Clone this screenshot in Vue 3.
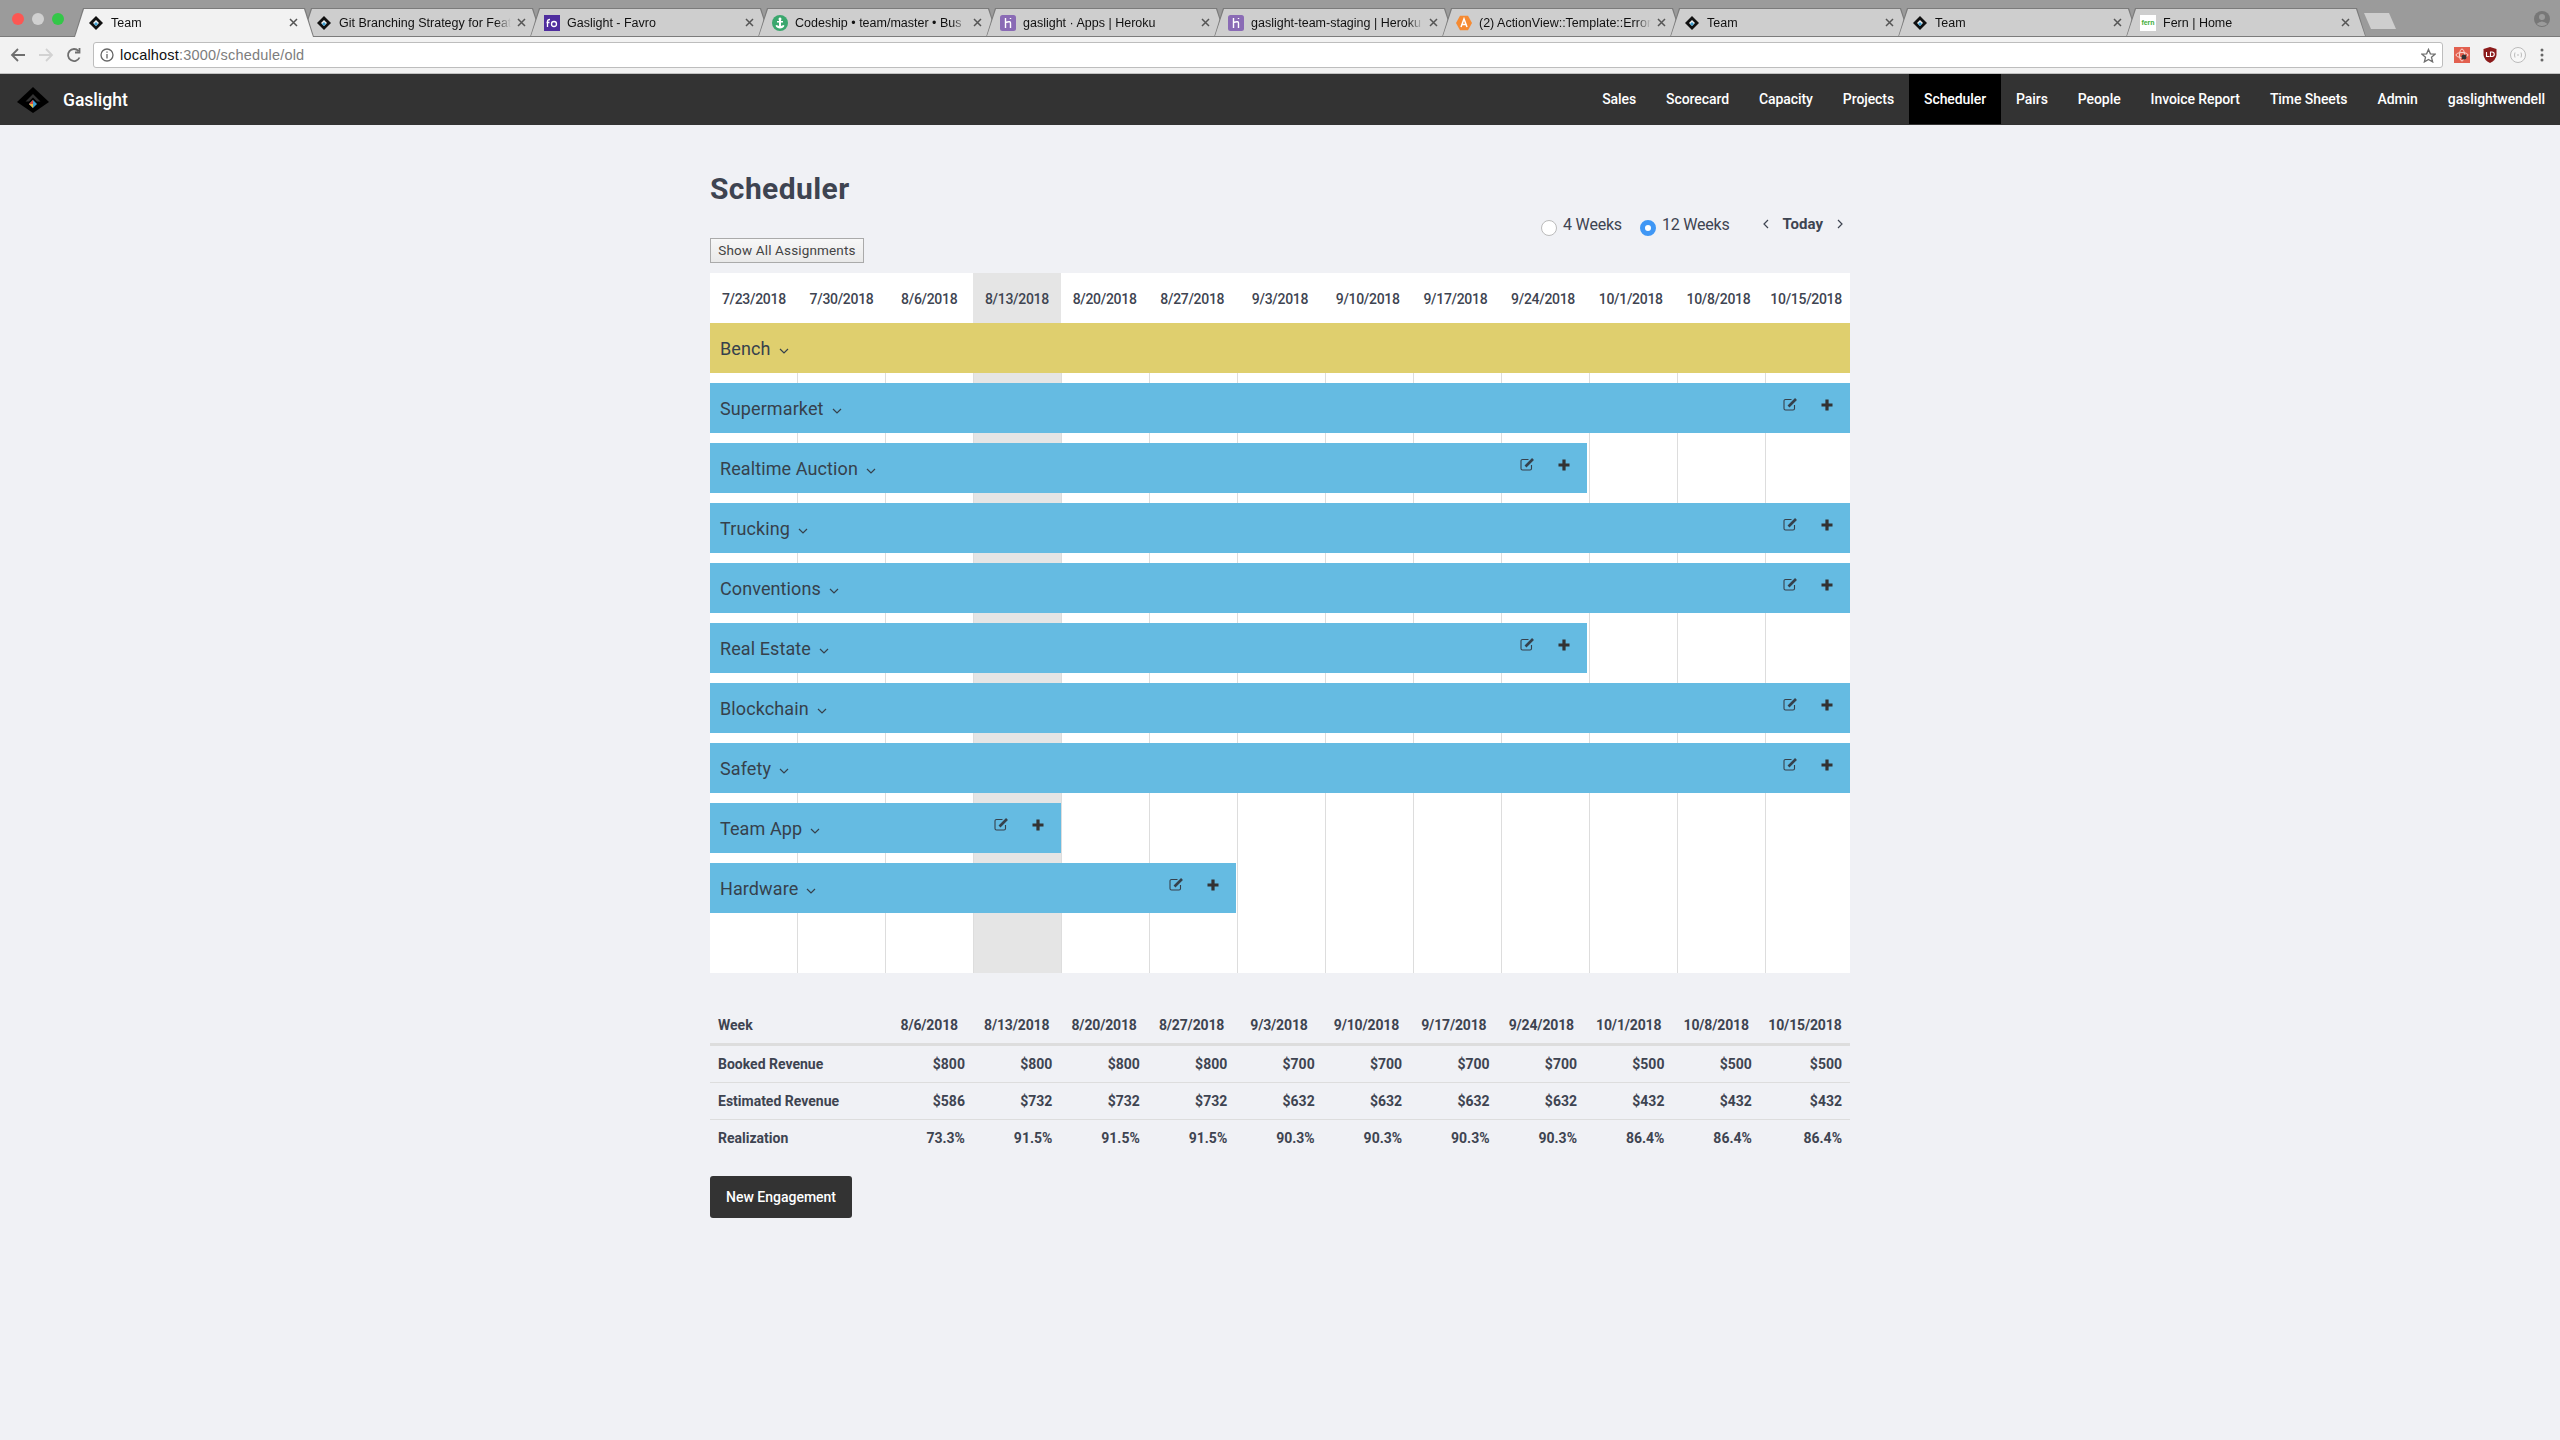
<script setup>
const tabs = [
  { title: 'Team', icon: 'logo', active: true },
  { title: 'Git Branching Strategy for Feat', icon: 'logo' },
  { title: 'Gaslight - Favro', icon: 'favro' },
  { title: 'Codeship • team/master • Bus', icon: 'codeship' },
  { title: 'gaslight · Apps | Heroku', icon: 'heroku' },
  { title: 'gaslight-team-staging | Heroku', icon: 'heroku' },
  { title: '(2) ActionView::Template::Error', icon: 'airbrake' },
  { title: 'Team', icon: 'logo' },
  { title: 'Team', icon: 'logo' },
  { title: 'Fern | Home', icon: 'fern' },
]

const navItems = ['Sales', 'Scorecard', 'Capacity', 'Projects', 'Scheduler', 'Pairs', 'People', 'Invoice Report', 'Time Sheets', 'Admin', 'gaslightwendell']

const dates = ['7/23/2018', '7/30/2018', '8/6/2018', '8/13/2018', '8/20/2018', '8/27/2018', '9/3/2018', '9/10/2018', '9/17/2018', '9/24/2018', '10/1/2018', '10/8/2018', '10/15/2018']

const projects = [
  { name: 'Bench', weeks: 13, bench: true },
  { name: 'Supermarket', weeks: 13 },
  { name: 'Realtime Auction', weeks: 10 },
  { name: 'Trucking', weeks: 13 },
  { name: 'Conventions', weeks: 13 },
  { name: 'Real Estate', weeks: 10 },
  { name: 'Blockchain', weeks: 13 },
  { name: 'Safety', weeks: 13 },
  { name: 'Team App', weeks: 4 },
  { name: 'Hardware', weeks: 6 },
]

const summary = [
  { label: 'Booked Revenue', values: ['$800', '$800', '$800', '$800', '$700', '$700', '$700', '$700', '$500', '$500', '$500'] },
  { label: 'Estimated Revenue', values: ['$586', '$732', '$732', '$732', '$632', '$632', '$632', '$632', '$432', '$432', '$432'] },
  { label: 'Realization', values: ['73.3%', '91.5%', '91.5%', '91.5%', '90.3%', '90.3%', '90.3%', '90.3%', '86.4%', '86.4%', '86.4%'] },
]
</script>

<template>
  <div class="page">
    <svg class="defs" aria-hidden="true">
      <symbol id="logo" viewBox="0 0 32 26">
        <path d="M16 0 32 15 16 26 0 15Z" fill="#000" />
        <path d="M16 7 23.500 14.500 20 14.500 16 10.500 12 14.500 8.500 14.500Z" fill="#333" />
        <path d="M16 13 20 17 16 21 12 17Z" fill="#3f9fd0" />
        <path d="M12 17 16 13 16 17Z" fill="#e0473c" />
        <path d="M12 17 16 21 16 17Z" fill="#e8b93c" />
      </symbol>
      <symbol id="tablogo" viewBox="0 0 16 16">
        <path d="M8 1 15 8 8 15 1 8Z" fill="#111" />
        <path d="M8 5 11 8 8 11 5 8Z" fill="#f2f2f2" />
        <path d="M8 7 10 9 8 11 6 9Z" fill="#3f9fd0" />
      </symbol>
      <symbol id="favro" viewBox="0 0 16 16">
        <rect width="16" height="16" fill="#4f2d9e" />
        <path d="M3.500 12V6.500Q3.500 4.500 6 4.500M2.500 7.500H5.500" fill="none" stroke="#fff" stroke-width="1.300" />
        <circle cx="10" cy="9" r="2.500" fill="none" stroke="#fff" stroke-width="1.300" />
      </symbol>
      <symbol id="codeship" viewBox="0 0 16 16">
        <circle cx="8" cy="8" r="8" fill="#3aa76d" />
        <path d="M8 2.500a1.500 1.500 0 0 1 1 2.600V6h2v1.500H9V11l2.500-1 1 .8C11.500 12.500 10 13.500 8 13.500S4.500 12.500 3.500 10.800l1-.8L7 11V7.500H5V6h2V5.100A1.500 1.500 0 0 1 8 2.500Z" fill="#fff" />
      </symbol>
      <symbol id="heroku" viewBox="0 0 16 16">
        <rect width="16" height="16" rx="2.500" fill="#8a6bb5" />
        <path d="M5.500 3v10M5.500 7.500Q11 5.500 10.500 8.500V13M10.500 3v1" fill="none" stroke="#fff" stroke-width="1.400" />
      </symbol>
      <symbol id="airbrake" viewBox="0 0 16 16">
        <path d="M4 .8H12L16 8 12 15.200H4L0 8Z" fill="#f58a32" />
        <path d="M5 12 8 4 11 12M6.200 9.500H9.800" fill="none" stroke="#fff" stroke-width="1.500" />
      </symbol>
    </svg>

    <div class="tabstrip">
      <div class="lights">
        <span class="light red"></span>
        <span class="light grey"></span>
        <span class="light green"></span>
      </div>
      <div
        v-for="(tab, i) in tabs"
        :key="i"
        class="tab"
        :class="{ active: tab.active }"
      >
        <span v-if="tab.icon === 'fern'" class="fern-icon">fern</span>
        <svg v-else class="favicon"><use :href="tab.icon === 'logo' ? '#tablogo' : '#' + tab.icon" /></svg>
        <span class="tab-title">{{ tab.title }}</span>
        <svg class="tab-close" viewBox="0 0 9 9"><path d="M1 1 8 8M8 1 1 8" stroke="#555" stroke-width="1.500" /></svg>
      </div>
      <div class="new-tab"></div>
      <svg class="profile" viewBox="0 0 16 16">
        <circle cx="8" cy="8" r="8" fill="#777" />
        <circle cx="8" cy="6" r="3" fill="#9b9b9b" />
        <path d="M2.500 13Q8 8 13.500 13Q8 17 2.500 13Z" fill="#9b9b9b" />
      </svg>
    </div>

    <div class="toolbar">
      <svg class="tool" viewBox="0 0 16 16"><path d="M15 8H2M8 2 2 8l6 6" fill="none" stroke="#6e6e6e" stroke-width="1.800" /></svg>
      <svg class="tool" viewBox="0 0 16 16"><path d="M1 8H14M8 2l6 6-6 6" fill="none" stroke="#d2d2d2" stroke-width="1.800" /></svg>
      <svg class="tool" viewBox="0 0 16 16"><path d="M13.500 10.500A6 6 0 1 1 12.500 4M13.500 1v4.500H9" fill="none" stroke="#6e6e6e" stroke-width="1.800" /></svg>
      <div class="omnibox">
        <svg class="info" viewBox="0 0 14 14">
          <circle cx="7" cy="7" r="6" fill="none" stroke="#666" stroke-width="1.300" />
          <path d="M7 6v4.500M7 3.500v1.300" stroke="#666" stroke-width="1.300" />
        </svg>
        <span class="url"><span class="host">localhost</span>:3000/schedule/old</span>
        <svg class="star" viewBox="0 0 16 16"><path d="M8 1.500 10 6.200l5 .4-3.800 3.300 1.200 4.900L8 12.200l-4.400 2.600 1.200-4.900L1 6.600l5-.4Z" fill="none" stroke="#6e6e6e" stroke-width="1.400" /></svg>
      </div>
      <div class="extensions">
        <svg class="ext" viewBox="0 0 16 16">
          <rect width="16" height="16" fill="#e2604f" />
          <ellipse cx="8" cy="8" rx="6" ry="2.500" fill="none" stroke="#fbd8d2" />
          <ellipse cx="8" cy="8" rx="2.500" ry="6" fill="none" stroke="#fbd8d2" />
          <circle cx="10" cy="10" r="2.500" fill="#333" />
        </svg>
        <svg class="ext" viewBox="0 0 16 16">
          <path d="M1.500 2 8 0l6.500 2v6Q14 13 8 16 2 13 1.500 8Z" fill="#8b1a1a" />
          <path d="M4.500 5v4.500h3M8.500 9.500V5h1.500a1.500 1.500 0 0 1 0 4.500Z" fill="none" stroke="#fff" stroke-width="1.100" />
        </svg>
        <svg class="ext" viewBox="0 0 16 16">
          <circle cx="8" cy="8" r="7.500" fill="#f7f7f7" stroke="#bbb" />
          <path d="M5 5.500Q4 8 5 10.500M11 5.500Q12 8 11 10.500M7 8h2" fill="none" stroke="#bbb" />
        </svg>
        <svg class="menu-dots" viewBox="0 0 4 14">
          <circle cx="2" cy="2" r="1.500" fill="#666" />
          <circle cx="2" cy="7" r="1.500" fill="#666" />
          <circle cx="2" cy="12" r="1.500" fill="#666" />
        </svg>
      </div>
    </div>

    <nav class="navbar">
      <div class="brand">
        <svg class="brand-logo"><use href="#logo" /></svg>
        <span class="brand-name">Gaslight</span>
      </div>
      <div class="nav-links">
        <a v-for="item in navItems" :key="item" class="nav-link" :class="{ current: item === 'Scheduler' }">{{ item }}</a>
      </div>
    </nav>

    <main class="content">
      <div class="head">
        <div class="head-left">
          <h1 class="title">Scheduler</h1>
          <button type="button" class="show-all">Show All Assignments</button>
        </div>
        <div class="controls">
          <label class="radio"><span class="dot"></span><span class="radio-text">4 Weeks</span></label>
          <label class="radio"><span class="dot on"></span><span class="radio-text">12 Weeks</span></label>
          <div class="pager">
            <svg class="pager-arrow" viewBox="0 0 6 10"><path d="M5 1 1 5l4 4" fill="none" stroke="#3e4451" stroke-width="1.200" /></svg>
            <span class="today">Today</span>
            <svg class="pager-arrow" viewBox="0 0 6 10"><path d="M1 1l4 4-4 4" fill="none" stroke="#3e4451" stroke-width="1.200" /></svg>
          </div>
        </div>
      </div>

      <div class="dates">
        <div v-for="(d, i) in dates" :key="d" class="date" :class="{ hl: i === 3 }">{{ d }}</div>
      </div>

      <div class="board">
        <div class="cols">
          <div v-for="(d, i) in dates" :key="d" class="col" :class="{ hl: i === 3 }"></div>
        </div>
        <div class="rows">
          <div
            v-for="p in projects"
            :key="p.name"
            class="row"
            :class="{ bench: p.bench }"
            :style="{ width: (p.weeks / 13) * 100 + '%' }"
          >
            <span class="row-name">{{ p.name }}</span>
            <svg class="chevron" viewBox="0 0 10 6"><path d="M1 1l4 4 4-4" fill="none" stroke="#36414c" stroke-width="1.200" /></svg>
            <div v-if="!p.bench" class="row-actions">
              <svg class="edit" viewBox="0 0 15 13">
                <path d="M8.500 1.500H2.500A1.500 1.500 0 0 0 1 3v7.500A1.500 1.500 0 0 0 2.500 12h7.500a1.500 1.500 0 0 0 1.500-1.500V7" fill="none" stroke="#36414c" stroke-width="1.100" />
                <path d="M5.500 8.500 13 1" fill="none" stroke="#36414c" stroke-width="2.600" />
              </svg>
              <svg class="plus" viewBox="0 0 12 12"><path d="M6 .5v11M.5 6h11" stroke="#333" stroke-width="3.200" /></svg>
            </div>
          </div>
        </div>
      </div>

      <div class="summary">
        <div class="sum-row sum-head">
          <div class="sum-label">Week</div>
          <div v-for="d in dates.slice(2)" :key="d" class="sum-date">{{ d }}</div>
        </div>
        <div v-for="row in summary" :key="row.label" class="sum-row">
          <div class="sum-label">{{ row.label }}</div>
          <div v-for="(v, i) in row.values" :key="i" class="sum-val">{{ v }}</div>
        </div>
      </div>

      <button type="button" class="new-engagement">New Engagement</button>
    </main>
  </div>
</template>

<style scoped>
.page {
  min-height: 1440px;
  background: #f0f1f5;
  font-family: Roboto, "Liberation Sans", sans-serif;
  color: #3e4451;
}

.defs {
  display: none;
}

.tabstrip {
  display: flex;
  align-items: flex-end;
  height: 37px;
  box-sizing: border-box;
  background: #9b9b9b;
  border-bottom: 1px solid #7b7b7b;
}

.lights {
  display: flex;
  gap: 8px;
  width: 74px;
  box-sizing: border-box;
  padding: 0 0 11px 12px;
  align-self: flex-end;
}

.light {
  width: 12px;
  height: 12px;
  border-radius: 50%;
}

.light.red { background: #fc5753; }
.light.grey { background: #d0d0d0; }
.light.green { background: #33c748; }

.tab {
  position: relative;
  display: flex;
  align-items: center;
  width: 240px;
  height: 29px;
  margin-right: -12px;
  margin-bottom: -1px;
  padding: 0 16px 0 14px;
  box-sizing: border-box;
  flex-shrink: 0;
  isolation: isolate;
  font-family: "Liberation Sans", sans-serif;
  font-size: 12.500px;
  color: #111;
}

.tab::before,
.tab::after {
  content: '';
  position: absolute;
  z-index: -1;
  inset: 0;
  clip-path: polygon(0 100%, 9px 0, calc(100% - 9px) 0, 100% 100%);
}

.tab::before {
  background: #7b7b7b;
}

.tab::after {
  top: 1px;
  left: 1px;
  right: 1px;
  bottom: 1px;
  background: #cecece;
}

.tab.active {
  z-index: 2;
}

.tab.active::after {
  bottom: 0;
  background: #f2f2f2;
}

.favicon {
  width: 16px;
  height: 16px;
  flex-shrink: 0;
}

.fern-icon {
  width: 16px;
  height: 16px;
  flex-shrink: 0;
  background: #fff;
  color: #3eae3a;
  font-size: 7px;
  font-weight: 700;
  line-height: 16px;
  text-align: center;
}

.tab-title {
  flex: 1;
  min-width: 0;
  margin: 0 3px 0 7px;
  white-space: nowrap;
  overflow: hidden;
  -webkit-mask-image: linear-gradient(to right, #000 calc(100% - 18px), transparent calc(100% - 3px));
  mask-image: linear-gradient(to right, #000 calc(100% - 18px), transparent calc(100% - 3px));
}

.tab-close {
  width: 9px;
  height: 9px;
  flex-shrink: 0;
}

.new-tab {
  width: 32px;
  height: 16px;
  margin: 0 0 7px 10px;
  flex-shrink: 0;
  background: #cecece;
  clip-path: polygon(0 0, 25px 0, 100% 100%, 7px 100%);
}

.profile {
  width: 16px;
  height: 16px;
  margin-left: auto;
  margin-right: 10px;
  align-self: flex-start;
  margin-top: 11px;
}

.toolbar {
  display: flex;
  align-items: center;
  height: 37px;
  box-sizing: border-box;
  background: #f2f2f2;
  border-bottom: 1px solid #c2c2c2;
  padding: 0 10px 0 10px;
}

.tool {
  width: 16px;
  height: 16px;
  margin-right: 12px;
  flex-shrink: 0;
}

.omnibox {
  display: flex;
  align-items: center;
  flex: 1;
  height: 26px;
  box-sizing: border-box;
  margin-left: -1px;
  padding: 0 6px 0 6px;
  background: #fff;
  border: 1px solid #bdbdbd;
  border-radius: 3px;
}

.info {
  width: 14px;
  height: 14px;
  margin-right: 6px;
  flex-shrink: 0;
}

.url {
  flex: 1;
  font-family: "Liberation Sans", sans-serif;
  font-size: 14.500px;
  letter-spacing: 0.2px;
  color: #7d7d7d;
}

.host {
  color: #111;
}

.star {
  width: 15px;
  height: 15px;
}

.extensions {
  display: flex;
  align-items: center;
  gap: 12px;
  margin-left: 11px;
}

.ext {
  width: 16px;
  height: 16px;
}

.menu-dots {
  width: 4px;
  height: 14px;
  margin-left: 2px;
  margin-right: 6px;
}

.navbar {
  display: flex;
  justify-content: space-between;
  height: 51px;
  background: #333;
  color: #fff;
}

.brand {
  display: flex;
  align-items: center;
  padding-left: 17px;
}

.brand-logo {
  width: 32px;
  height: 26px;
}

.brand-name {
  margin: 1px 0 0 14px;
  font-size: 17.500px;
  font-weight: 500;
}

.nav-links {
  display: flex;
  height: 50px;
}

.nav-link {
  display: flex;
  align-items: center;
  padding: 0 15px;
  font-size: 14px;
  font-weight: 500;
  letter-spacing: -0.08px;
}

.nav-link.current {
  background: #000;
}

.content {
  width: 1140px;
  margin: 0 auto;
}

.head {
  display: flex;
  justify-content: space-between;
  height: 148px;
  box-sizing: border-box;
}

.head-left {
  display: flex;
  flex-direction: column;
  align-items: flex-start;
}

.title {
  margin: 47px 0 0;
  font-size: 30px;
  line-height: 34px;
  font-weight: 700;
  letter-spacing: 0.4px;
  color: #3e4451;
}

.show-all {
  margin-top: 32px;
  height: 25px;
  width: 154px;
  padding: 0 0 2px;
  border: 1px solid #aaa;
  background: linear-gradient(#f7f7f7, #e9e9e9);
  font-family: inherit;
  font-size: 13.500px;
  letter-spacing: 0.15px;
  color: #444;
}

.controls {
  display: flex;
  align-items: flex-start;
  padding-top: 90px;
  padding-right: 7px;
  height: fit-content;
  font-size: 16px;
  line-height: 18px;
}

.radio {
  display: flex;
  align-items: flex-start;
  margin-right: 18px;
}

.radio-text {
  margin-top: 1px;
  letter-spacing: -0.2px;
}

.dot {
  width: 16px;
  height: 16px;
  box-sizing: border-box;
  margin: 5px 6px 0 0;
  border: 1px solid #bbb;
  border-radius: 50%;
  background: #fff;
}

.dot.on {
  border: 5px solid #3f97f5;
}

.pager {
  display: flex;
  align-items: center;
  margin-left: 15px;
}

.pager-arrow {
  width: 6px;
  height: 10px;
}

.today {
  margin: 0 14px;
  font-size: 15px;
  font-weight: 700;
}

.dates {
  display: grid;
  grid-template-columns: repeat(13, 1fr);
  height: 50px;
  background: #fff;
}

.date {
  display: flex;
  align-items: center;
  justify-content: center;
  padding-top: 1px;
  font-size: 14px;
  font-weight: 500;
  letter-spacing: -0.3px;
}

.date.hl {
  background: #e5e5e5;
}

.board {
  display: grid;
  height: 650px;
  background: #fff;
}

.cols,
.rows {
  grid-area: 1 / 1;
}

.cols {
  display: grid;
  grid-template-columns: repeat(12, 88px) 1fr;
}

.col {
  border-right: 1px solid #ddd;
}

.col:last-child {
  border-right: none;
}

.col.hl {
  background: #e5e5e5;
}

.rows {
  display: flex;
  flex-direction: column;
  gap: 10px;
}

.row {
  display: flex;
  align-items: center;
  height: 50px;
  box-sizing: border-box;
  padding: 0 17px 0 10px;
  background: #65bbe2;
  color: #36414c;
}

.row.bench {
  background: #dfcf6e;
}

.row-name {
  margin-top: 1px;
  font-size: 18px;
  letter-spacing: 0.1px;
}

.chevron {
  width: 10px;
  height: 6px;
  margin: 6px 0 0 8px;
}

.row-actions {
  display: flex;
  align-items: center;
  gap: 23px;
  margin-left: auto;
  padding-bottom: 7px;
}

.edit {
  width: 15px;
  height: 13px;
}

.plus {
  width: 12px;
  height: 12px;
}

.summary {
  margin-top: 34px;
  font-size: 14px;
  font-weight: 700;
}

.sum-row {
  display: grid;
  grid-template-columns: 175.500px repeat(10, 87.440px) 1fr;
  align-items: center;
  height: 37px;
  box-sizing: border-box;
  padding-bottom: 1px;
  border-bottom: 1px solid #ddd;
}

.sum-row:last-child {
  padding-bottom: 2px;
  border-bottom: none;
}

.sum-head {
  height: 39px;
  padding-bottom: 0;
  border-bottom: 3px solid #ddd;
}

.sum-label {
  padding-left: 8px;
}

.sum-date {
  text-align: center;
  letter-spacing: -0.15px;
}

.sum-val {
  text-align: right;
  padding-right: 8px;
}

.new-engagement {
  display: block;
  margin-top: 19px;
  width: 142px;
  height: 42px;
  padding: 0;
  border: none;
  border-radius: 3px;
  background: #333;
  color: #fff;
  font-family: inherit;
  font-size: 14px;
  font-weight: 500;
}
</style>
